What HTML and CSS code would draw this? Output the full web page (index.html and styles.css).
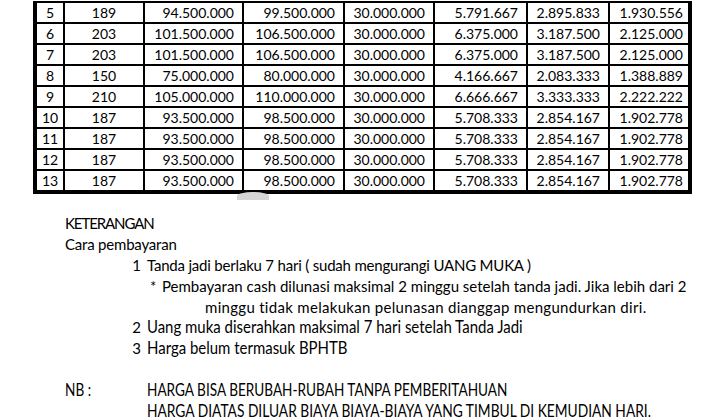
FILE: index.html
```html
<!DOCTYPE html>
<html>
<head>
<meta charset="utf-8">
<link rel="stylesheet" href="styles.css">
</head>
<body>
<div class="page">
  <table class="prices">
    <colgroup>
      <col class="c1"><col class="c2"><col class="c3"><col class="c4"><col class="c5"><col class="c6"><col class="c7"><col class="c8">
    </colgroup>
    <tbody>
      <tr><td class="ctr">5</td><td class="ctr">189</td><td>94.500.000</td><td>99.500.000</td><td>30.000.000</td><td>5.791.667</td><td>2.895.833</td><td class="last">1.930.556</td></tr>
      <tr><td class="ctr">6</td><td class="ctr">203</td><td>101.500.000</td><td>106.500.000</td><td>30.000.000</td><td>6.375.000</td><td>3.187.500</td><td class="last">2.125.000</td></tr>
      <tr><td class="ctr">7</td><td class="ctr">203</td><td>101.500.000</td><td>106.500.000</td><td>30.000.000</td><td>6.375.000</td><td>3.187.500</td><td class="last">2.125.000</td></tr>
      <tr><td class="ctr">8</td><td class="ctr">150</td><td>75.000.000</td><td>80.000.000</td><td>30.000.000</td><td>4.166.667</td><td>2.083.333</td><td class="last">1.388.889</td></tr>
      <tr><td class="ctr">9</td><td class="ctr">210</td><td>105.000.000</td><td>110.000.000</td><td>30.000.000</td><td>6.666.667</td><td>3.333.333</td><td class="last">2.222.222</td></tr>
      <tr><td class="ctr">10</td><td class="ctr">187</td><td>93.500.000</td><td>98.500.000</td><td>30.000.000</td><td>5.708.333</td><td>2.854.167</td><td class="last">1.902.778</td></tr>
      <tr><td class="ctr">11</td><td class="ctr">187</td><td>93.500.000</td><td>98.500.000</td><td>30.000.000</td><td>5.708.333</td><td>2.854.167</td><td class="last">1.902.778</td></tr>
      <tr><td class="ctr">12</td><td class="ctr">187</td><td>93.500.000</td><td>98.500.000</td><td>30.000.000</td><td>5.708.333</td><td>2.854.167</td><td class="last">1.902.778</td></tr>
      <tr><td class="ctr">13</td><td class="ctr">187</td><td>93.500.000</td><td>98.500.000</td><td>30.000.000</td><td>5.708.333</td><td>2.854.167</td><td class="last">1.902.778</td></tr>
    </tbody>
  </table>
  <span class="bump"></span>

  <div class="notes">
    <div class="line head caps">KETERANGAN</div>
    <div class="line head tight">Cara pembayaran</div>
    <div class="line item"><span class="num">1</span><span class="txt tight">Tanda jadi berlaku 7 hari ( sudah mengurangi UANG MUKA )</span></div>
    <div class="line star"><span class="mark">*</span><span class="txt">Pembayaran cash dilunasi maksimal 2 minggu setelah tanda jadi. Jika lebih dari 2</span></div>
    <div class="line cont">minggu tidak melakukan pelunasan dianggap mengundurkan diri.</div>
    <div class="line item"><span class="num">2</span><span class="txt narrow">Uang muka diserahkan maksimal 7 hari setelah Tanda Jadi</span></div>
    <div class="line item"><span class="num">3</span><span class="txt narrow">Harga belum termasuk BPHTB</span></div>
    <div class="line blank"></div>
    <div class="line nb"><span class="nblabel narrow nbl">NB :</span><span class="txt narrow nbt">HARGA BISA BERUBAH-RUBAH TANPA PEMBERITAHUAN</span></div>
    <div class="line nb"><span class="nblabel"></span><span class="txt narrow nbt2">HARGA DIATAS DILUAR BIAYA BIAYA-BIAYA YANG TIMBUL DI KEMUDIAN HARI.</span></div>
  </div>
</div>
</body>
</html>
```
FILE: styles.css
```css
html, body {
  margin: 0;
  padding: 0;
  background: #ffffff;
}
body {
  font-family: Lato, "Open Sans", sans-serif;
  font-size: 15px;
  color: #000;
}
.page {
  position: relative;
  width: 720px;
  height: 420px;
  overflow: hidden;
}
.prices {
  border-collapse: collapse;
  margin-left: 33px;
  margin-top: 1px;
  table-layout: fixed;
  border-left: 4px solid #000;
  border-right: 4px solid #000;
  border-bottom: 4px solid #000;
  font-size: 14px;
}
.c1 { width: 29px; }
.c2 { width: 80px; }
.c3 { width: 99px; }
.c4 { width: 101px; }
.c5 { width: 90px; }
.c6 { width: 93px; }
.c7 { width: 82px; }
.c8 { width: 81px; }
.prices td {
  border: 2px solid #000;
  height: 19px;
  padding: 0 8px 0 0;
  text-align: right;
  line-height: 18px;
  white-space: nowrap;
  overflow: hidden;
}
.prices td.last {
  padding-right: 5px;
}
.prices td.ctr {
  text-align: center;
  padding: 0;
}
.bump {
  position: absolute;
  left: 237px;
  top: 192px;
  width: 32px;
  height: 8px;
  border-radius: 50% 50% 0 0;
  background: #d6d6d6;
}
.notes {
  margin-top: 19px;
  padding-left: 65px;
}
.line {
  height: 20.9px;
  line-height: 20.9px;
  white-space: nowrap;
  display: flex;
}
.line > span {
  flex-shrink: 0;
}
.caps {
  letter-spacing: -1.1px;
}
.tight {
  letter-spacing: -0.2px;
}
.item .num {
  width: 76px;
  text-align: right;
  margin-right: 6px;
}
.star {
  padding-left: 85px;
}
.star .mark {
  width: 12px;
}
.cont {
  padding-left: 140px;
  letter-spacing: 0.3px;
}
.narrow {
  display: inline-block;
  font-size: 17px;
  transform: scaleX(0.88);
  transform-origin: left center;
}
.nbt, .nbl {
  transform: scaleX(0.8);
}
.nbt2 {
  transform: scaleX(0.81);
}
.nb .nblabel {
  width: 82px;
}
```
